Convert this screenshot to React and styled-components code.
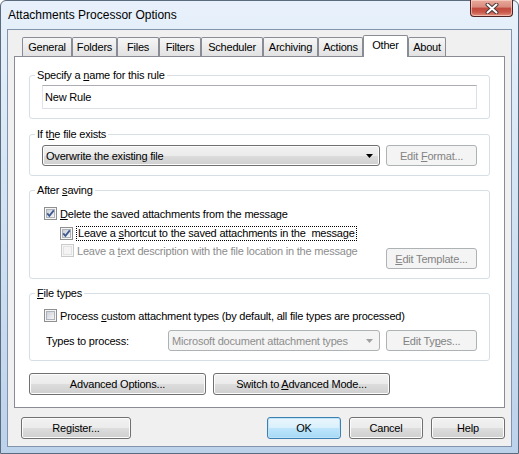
import React from "react";
import styled, { createGlobalStyle, css } from "styled-components";

const GlobalStyle = createGlobalStyle`
  html, body { margin: 0; padding: 0; }
  body {
    width: 519px;
    height: 454px;
    overflow: hidden;
    background: #fff;
    font-family: "Liberation Sans", Arial, sans-serif;
  }
  * { box-sizing: border-box; }
`;

const Window = styled.div`
  width: 519px;
  height: 454px;
  border: 1px solid #5b6b7d;
  border-radius: 6px 6px 0 0;
  background: linear-gradient(180deg, #e8f1fb 0%, #d7e6f5 35%, #bcd2eb 100%);
  display: flex;
  flex-direction: column;
  padding: 0 6px 6px;
`;

const TitleBar = styled.div`
  height: 28px;
  display: flex;
  align-items: flex-start;
  justify-content: space-between;
  flex: none;
`;

const Title = styled.div`
  font-size: 12px;
  line-height: 15px;
  color: #000;
  margin: 7px 0 0 1px;
`;

const CloseBtn = styled.div`
  width: 43px;
  height: 17px;
  margin: -1px -1px 0 0;
  border: 1px solid #4d2222;
  border-top: none;
  border-radius: 0 0 4px 4px;
  background: linear-gradient(180deg, #e9aa9c 0%, #d88a7c 45%, #c04a3e 50%, #c9574a 75%, #e0907e 100%);
  box-shadow: inset 0 0 0 1px rgba(255, 220, 210, 0.6);
  display: flex;
  align-items: center;
  justify-content: center;
`;

const Client = styled.div`
  flex: 1;
  border: 1px solid #8294ab;
  background: #f0f0f0;
  padding: 5px 6px 7px;
  display: flex;
  flex-direction: column;
  font-size: 11px;
  letter-spacing: -0.2px;
  color: #000;
`;

const TabStrip = styled.div`
  display: flex;
  align-items: flex-end;
  height: 21px;
  padding-left: 8px;
  position: relative;
  z-index: 2;
`;

const Tab = styled.div`
  width: ${(p) => p.$w}px;
  height: 19px;
  border: 1px solid #898c95;
  border-bottom: none;
  border-radius: 2px 2px 0 0;
  background: linear-gradient(180deg, #f6f6f6 0%, #ececec 50%, #e2e2e2 100%);
  display: flex;
  align-items: center;
  justify-content: center;
  line-height: 13px;
  ${(p) =>
    p.$active &&
    css`
      height: 22px;
      margin-bottom: -1px;
      background: #fff;
      align-items: flex-start;
      padding-top: 3px;
    `}
`;

const Panel = styled.div`
  border: 1px solid #898c95;
  background: #fff;
  padding: 12px 14px 12px;
  display: flex;
  flex-direction: column;
`;

const Group = styled.fieldset`
  margin: ${(p) => p.$mt || 0}px 0 0;
  padding: 0;
  border: 1px solid #d5dfe5;
  border-radius: 3px;
  min-width: 0;
`;

const Legend = styled.legend`
  margin-left: 5px;
  padding: 0 2px;
  line-height: 13px;
  font-size: 11px;
`;

const GroupBody = styled.div`
  padding: ${(p) => p.$pad};
  display: flex;
  flex-direction: column;
`;

const TextInput = styled.div`
  height: 24px;
  border: 1px solid #dbdfe6;
  border-top-color: #abadb3;
  border-left-color: #e2e3ea;
  background: #fff;
  padding-left: 2px;
  display: flex;
  align-items: center;
`;

const Row = styled.div`
  display: flex;
  align-items: ${(p) => p.$align || "center"};
  justify-content: ${(p) => p.$justify || "flex-start"};
  margin-top: ${(p) => p.$mt || 0}px;
  margin-left: ${(p) => p.$ml || 0}px;
  gap: ${(p) => p.$gap || 0}px;
`;

const Combo = styled.div`
  width: ${(p) => p.$w}px;
  height: 21px;
  border: 1px solid ${(p) => (p.$disabled ? "#adb2b5" : "#707070")};
  border-radius: 3px;
  background: ${(p) =>
    p.$disabled
      ? "#f4f4f4"
      : "linear-gradient(180deg, #f2f2f2 0%, #ebebeb 50%, #dddddd 50%, #cfcfcf 100%)"};
  box-shadow: inset 0 0 0 1px ${(p) => (p.$disabled ? "#f4f4f4" : "#fcfcfc")};
  color: ${(p) => (p.$disabled ? "#8d8d8d" : "#000")};
  display: flex;
  align-items: center;
  justify-content: space-between;
  padding: 0 6px 0 3px;
  flex: none;
`;

const ButtonBox = styled.div`
  width: ${(p) => p.$w}px;
  height: ${(p) => p.$h || 21}px;
  margin-top: ${(p) => p.$mt || 0}px;
  border: 1px solid #707070;
  border-radius: 3px;
  background: linear-gradient(180deg, #f2f2f2 0%, #ebebeb 50%, #dddddd 50%, #cfcfcf 100%);
  box-shadow: inset 0 0 0 1px #fcfcfc;
  display: flex;
  align-items: center;
  justify-content: center;
  flex: none;
  white-space: pre;
  ${(p) =>
    p.$disabled &&
    css`
      border-color: #adb2b5;
      background: #f4f4f4;
      box-shadow: none;
      color: #838383;
    `}
  ${(p) =>
    p.$default &&
    css`
      border-color: #3c7fb1;
      background: linear-gradient(180deg, #eaf6fd 0%, #d9f0fc 50%, #bee6fd 50%, #a7d9f5 100%);
      box-shadow: inset 0 0 0 1px #bfe3f8;
    `}
`;

const Button = ({ children, ...rest }) => (
  <ButtonBox {...rest}>
    <span>{children}</span>
  </ButtonBox>
);

const CheckRow = styled.label`
  display: flex;
  align-items: center;
  gap: 3px;
  height: 15px;
  color: ${(p) => (p.$disabled ? "#8d8d8d" : "#000")};
`;

const Focus = styled.span`
  border: 1px dotted #000;
  padding: 0 1px;
  line-height: 13px;
  white-space: pre;
`;

const Label = styled.span`
  width: ${(p) => p.$w}px;
  padding-left: 2px;
  flex: none;
`;

const Footer = styled.div`
  display: flex;
  margin-top: 9px;
  padding-left: 7px;
  gap: 8px;
`;

const Spacer = styled.div`
  flex: 1;
`;

const CheckBox = ({ checked, disabled }) => (
  <svg width="13" height="13" viewBox="0 0 13 13" style={{ flex: "none" }}>
    <defs>
      <linearGradient id="cbg" x1="0" y1="0" x2="1" y2="1">
        <stop offset="0" stopColor="#c9cdd3" />
        <stop offset="1" stopColor="#f8f9fa" />
      </linearGradient>
    </defs>
    <rect x="0.5" y="0.5" width="12" height="12" fill="#f6f6f6" stroke={disabled ? "#c9cacb" : "#8e8f8f"} />
    <rect
      x="2.5"
      y="2.5"
      width="8"
      height="8"
      fill={disabled ? "#f4f4f4" : "url(#cbg)"}
      stroke={disabled ? "#e2e2e2" : "#aeb3b9"}
    />
    {checked && (
      <path d="M3.2 6.3 L5.4 8.8 L9.8 3.4" stroke="#3f5a91" strokeWidth="1.8" fill="none" />
    )}
  </svg>
);

const Arrow = ({ disabled }) => (
  <svg width="7" height="4" viewBox="0 0 7 4">
    <path d="M0 0 H7 L3.5 4 Z" fill={disabled ? "#a0a0a0" : "#000"} />
  </svg>
);

const tabs = [
  ["General", 50],
  ["Folders", 45],
  ["Files", 42],
  ["Filters", 42],
  ["Scheduler", 62],
  ["Archiving", 55],
  ["Actions", 45],
  ["Other", 45],
  ["About", 38],
];

export default function App() {
  return (
    <>
      <GlobalStyle />
      <Window>
        <TitleBar>
          <Title>Attachments Processor Options</Title>
          <CloseBtn>
            <svg width="14" height="11" viewBox="0 0 14 11">
              <path d="M2.5 1.5 L11.5 9.5 M11.5 1.5 L2.5 9.5" stroke="#4a3a3a" strokeWidth="4" strokeLinecap="round" />
              <path d="M2.5 1.5 L11.5 9.5 M11.5 1.5 L2.5 9.5" stroke="#fff" strokeWidth="2" strokeLinecap="round" />
            </svg>
          </CloseBtn>
        </TitleBar>
        <Client>
          <TabStrip>
            {tabs.map(([name, w]) => (
              <Tab key={name} $w={w} $active={name === "Other"}>
                {name}
              </Tab>
            ))}
          </TabStrip>
          <Panel>
            <Group>
              <Legend>
                Specify a <u>n</u>ame for this rule
              </Legend>
              <GroupBody $pad="3px 12px 9px 12px">
                <TextInput>New Rule</TextInput>
              </GroupBody>
            </Group>

            <Group $mt={9}>
              <Legend>
                If t<u>h</u>e file exists
              </Legend>
              <GroupBody $pad="4px 12px 9px 12px">
                <Row $gap={6}>
                  <Combo $w={338}>
                    <span>Overwrite the existing file</span>
                    <Arrow />
                  </Combo>
                  <Button $w={91} $disabled>
                    Edit <u>F</u>ormat...
                  </Button>
                </Row>
              </GroupBody>
            </Group>

            <Group $mt={8}>
              <Legend>
                After <u>s</u>aving
              </Legend>
              <GroupBody $pad="9px 12px 9px 14px">
                <CheckRow>
                  <CheckBox checked />
                  <span>
                    <u>D</u>elete the saved attachments from the message
                  </span>
                </CheckRow>
                <Row $mt={5} $ml={16}>
                  <CheckRow>
                    <CheckBox checked />
                    <Focus>
                      Leave a <u>s</u>hortcut to the saved attachments in the  message
                    </Focus>
                  </CheckRow>
                </Row>
                <Row $mt={2} $ml={17} $align="flex-start" $justify="space-between">
                  <CheckRow $disabled>
                    <CheckBox disabled />
                    <span>
                      Leave a <u>t</u>ext description with the file location in the message
                    </span>
                  </CheckRow>
                  <Button $w={91} $mt={5} $disabled>
                    <u>E</u>dit Template...
                  </Button>
                </Row>
              </GroupBody>
            </Group>

            <Group $mt={8}>
              <Legend>
                <u>F</u>ile types
              </Legend>
              <GroupBody $pad="8px 12px 9px 14px">
                <CheckRow>
                  <CheckBox />
                  <span>
                    Process <u>c</u>ustom attachment types (by default, all file types are processed)
                  </span>
                </CheckRow>
                <Row $mt={7}>
                  <Label $w={124}>Types to process:</Label>
                  <Combo $w={212} $disabled>
                    <span>Microsoft document attachment types</span>
                    <Arrow disabled />
                  </Combo>
                  <Spacer />
                  <Button $w={91} $disabled>
                    Edit Ty<u>p</u>es...
                  </Button>
                </Row>
              </GroupBody>
            </Group>

            <Row $mt={12} $gap={7}>
              <Button $w={177} $h={22}>
                Advanced Options...
              </Button>
              <Button $w={177} $h={22}>
                Switch to <u>A</u>dvanced Mode...
              </Button>
            </Row>
          </Panel>
          <Footer>
            <Button $w={110} $h={22}>
              Register...
            </Button>
            <Spacer />
            <Button $w={74} $h={22} $default>
              OK
            </Button>
            <Button $w={74} $h={22}>
              Cancel
            </Button>
            <Button $w={74} $h={22}>
              Help
            </Button>
          </Footer>
        </Client>
      </Window>
    </>
  );
}
